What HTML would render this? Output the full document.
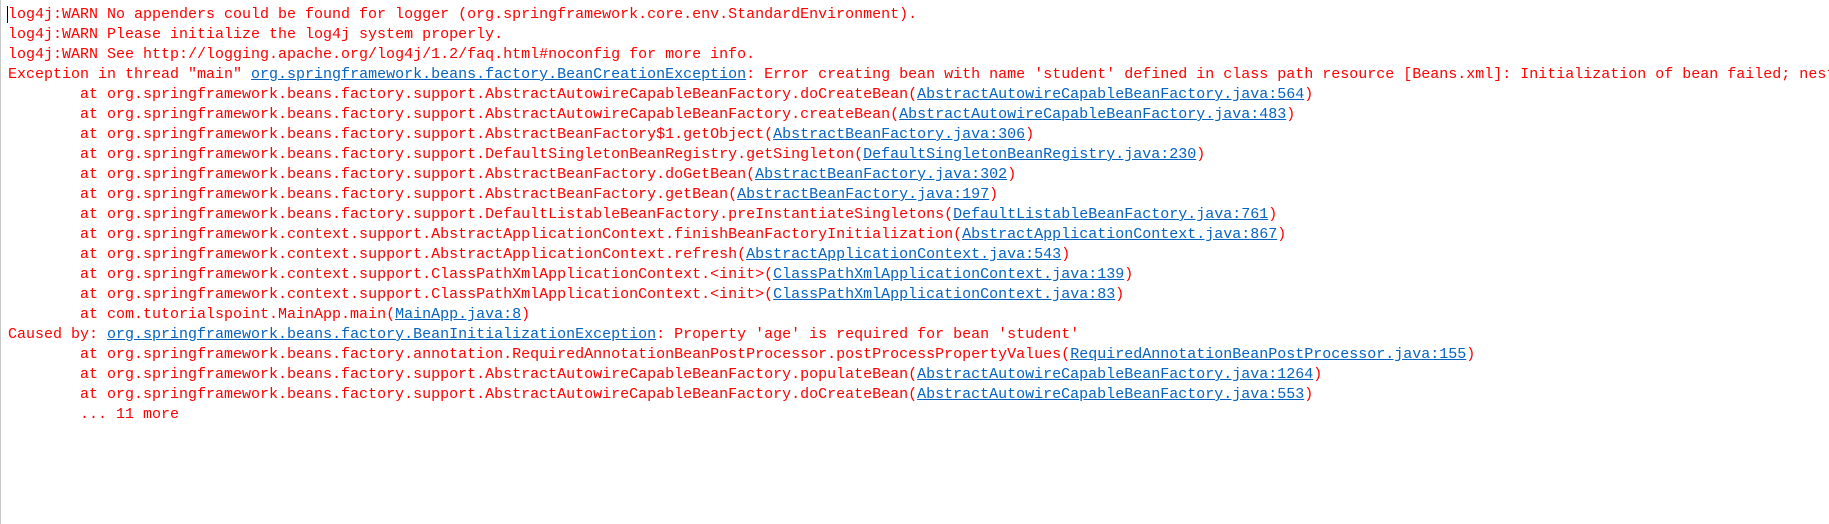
<!DOCTYPE html>
<html><head><meta charset="utf-8"><style>
html,body{margin:0;padding:0;background:#fff;width:1829px;height:524px;overflow:hidden}
body{border-left:1px solid #c8c8c8;box-sizing:border-box}
pre{margin:0;padding:5px 0 0 7px;font-family:"Liberation Mono",monospace;font-size:15px;line-height:20px;color:#ff0000;white-space:pre;tab-size:8;width:1821px;overflow:hidden}
a{color:#0563c1;text-decoration:underline}
.cur{border-left:1px solid #000;margin-left:-1px}
</style></head><body><pre><span class="cur"></span>log4j:WARN No appenders could be found for logger (org.springframework.core.env.StandardEnvironment).
log4j:WARN Please initialize the log4j system properly.
log4j:WARN See http://logging.apache.org/log4j/1.2/faq.html#noconfig for more info.
Exception in thread "main" <a>org.springframework.beans.factory.BeanCreationException</a>: Error creating bean with name 'student' defined in class path resource [Beans.xml]: Initialization of bean failed; nested exception
	at org.springframework.beans.factory.support.AbstractAutowireCapableBeanFactory.doCreateBean(<a>AbstractAutowireCapableBeanFactory.java:564</a>)
	at org.springframework.beans.factory.support.AbstractAutowireCapableBeanFactory.createBean(<a>AbstractAutowireCapableBeanFactory.java:483</a>)
	at org.springframework.beans.factory.support.AbstractBeanFactory$1.getObject(<a>AbstractBeanFactory.java:306</a>)
	at org.springframework.beans.factory.support.DefaultSingletonBeanRegistry.getSingleton(<a>DefaultSingletonBeanRegistry.java:230</a>)
	at org.springframework.beans.factory.support.AbstractBeanFactory.doGetBean(<a>AbstractBeanFactory.java:302</a>)
	at org.springframework.beans.factory.support.AbstractBeanFactory.getBean(<a>AbstractBeanFactory.java:197</a>)
	at org.springframework.beans.factory.support.DefaultListableBeanFactory.preInstantiateSingletons(<a>DefaultListableBeanFactory.java:761</a>)
	at org.springframework.context.support.AbstractApplicationContext.finishBeanFactoryInitialization(<a>AbstractApplicationContext.java:867</a>)
	at org.springframework.context.support.AbstractApplicationContext.refresh(<a>AbstractApplicationContext.java:543</a>)
	at org.springframework.context.support.ClassPathXmlApplicationContext.&lt;init&gt;(<a>ClassPathXmlApplicationContext.java:139</a>)
	at org.springframework.context.support.ClassPathXmlApplicationContext.&lt;init&gt;(<a>ClassPathXmlApplicationContext.java:83</a>)
	at com.tutorialspoint.MainApp.main(<a>MainApp.java:8</a>)
Caused by: <a>org.springframework.beans.factory.BeanInitializationException</a>: Property 'age' is required for bean 'student'
	at org.springframework.beans.factory.annotation.RequiredAnnotationBeanPostProcessor.postProcessPropertyValues(<a>RequiredAnnotationBeanPostProcessor.java:155</a>)
	at org.springframework.beans.factory.support.AbstractAutowireCapableBeanFactory.populateBean(<a>AbstractAutowireCapableBeanFactory.java:1264</a>)
	at org.springframework.beans.factory.support.AbstractAutowireCapableBeanFactory.doCreateBean(<a>AbstractAutowireCapableBeanFactory.java:553</a>)
	... 11 more
</pre></body></html>
